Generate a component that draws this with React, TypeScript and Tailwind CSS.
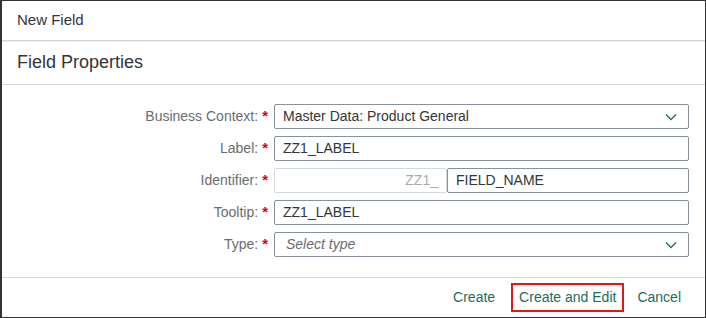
const font = { fontFamily: '"Liberation Sans", Arial, sans-serif' }

const Chevron = () => (
    <svg width="12" height="8" viewBox="0 0 12 8" fill="none">
        <path d="M1 1.5 L6 6.5 L11 1.5" stroke="#1b6e5e" strokeWidth="1.3" />
    </svg>
)

const Row = ({ label, children }: { label: string; children: React.ReactNode }) => (
    <div className="flex items-center h-[25px]">
        <div className="w-[274px] flex justify-end items-center pr-[6px] text-[14px] text-[#6a6d70]">
            <span>{label}</span>
            <span className="text-[#e00000] ml-[4px] text-[15px] font-bold">*</span>
        </div>
        <div className="w-[415px] h-full flex">{children}</div>
    </div>
)

const App = () => {
    return (
        <div
            className="w-[706px] h-[318px] bg-white border border-l-2 border-[#333] flex flex-col text-[#32363a]"
            style={font}
        >
            <div className="h-[40px] shrink-0 px-[15px] flex items-center text-[15px] border-b border-[#d6d6d6] shadow-[0_1px_1px_rgba(0,0,0,0.06)]">
                New Field
            </div>
            <div className="h-[44px] shrink-0 px-[15px] flex items-center text-[18px] border-b border-[#d9d9d9]">
                Field Properties
            </div>
            <div className="flex-1 pt-[19px] flex flex-col gap-[7px] -ml-[2px]">
                <Row label="Business Context:">
                    <div className="flex-1 border border-[#89919a] rounded-[2px] flex items-center justify-between pl-[8px] pr-[11px] text-[14px]">
                        <span>Master Data: Product General</span>
                        <Chevron />
                    </div>
                </Row>
                <Row label="Label:">
                    <div className="flex-1 border border-[#89919a] rounded-[2px] flex items-center pl-[8px] text-[14px]">
                        ZZ1_LABEL
                    </div>
                </Row>
                <Row label="Identifier:">
                    <div className="w-[173px] border border-[#d5d8dc] rounded-[2px] flex items-center justify-end pr-[8px] text-[14px] text-[#a8abae]">
                        ZZ1_
                    </div>
                    <div className="flex-1 border border-[#89919a] rounded-[2px] flex items-center pl-[8px] text-[14px]">
                        FIELD_NAME
                    </div>
                </Row>
                <Row label="Tooltip:">
                    <div className="flex-1 border border-[#89919a] rounded-[2px] flex items-center pl-[8px] text-[14px]">
                        ZZ1_LABEL
                    </div>
                </Row>
                <Row label="Type:">
                    <div className="flex-1 border border-[#89919a] rounded-[2px] flex items-center justify-between pl-[11px] pr-[11px] text-[14px]">
                        <span className="italic text-[#6a6d70]">Select type</span>
                        <Chevron />
                    </div>
                </Row>
            </div>
            <div className="h-[40px] shrink-0 border-t border-[#d9d9d9] flex items-center justify-end pr-[16px] text-[14px] text-[#1b6e5e]">
                <div className="px-[8px] h-[29px] flex items-center">Create</div>
                <div className="ml-[8px] px-[6px] h-[29px] flex items-center border-2 border-[#e8141c]">
                    Create and Edit
                </div>
                <div className="ml-[5px] px-[8px] h-[29px] flex items-center">Cancel</div>
            </div>
        </div>
    )
}

export default App
